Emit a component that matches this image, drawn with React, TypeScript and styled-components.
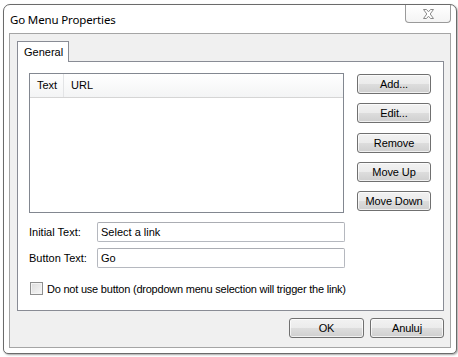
import React from 'react'
import styled, { createGlobalStyle } from 'styled-components'

const GlobalStyle = createGlobalStyle`
    html, body {
        margin: 0;
        padding: 0;
        background: #ffffff;
    }
    body {
        font-family: "Liberation Sans", Arial, sans-serif;
        font-size: 11px;
        color: #000;
    }
`

const Page = styled.div`
    width: 458px;
    height: 357px;
    padding: 4px 0 0 3px;
    box-sizing: border-box;
`

const Window = styled.div`
    width: 454px;
    height: 350px;
    box-sizing: border-box;
    border: 1px solid #6b6b6b;
    border-radius: 7px 7px 5px 5px;
    background: #ffffff;
    box-shadow: 1px 1px 2px rgba(0, 0, 0, 0.35);
    display: flex;
    flex-direction: column;
    padding: 0 5px 5px 5px;
`

const TitleBar = styled.div`
    height: 28px;
    display: flex;
    align-items: flex-start;
`

const Title = styled.div`
    font-family: "Noto Sans", "Open Sans", sans-serif;
    font-size: 11.5px;
    letter-spacing: -0.15px;
    line-height: 16px;
    margin-top: 7px;
    margin-left: 1px;
    color: #000;
`

const CloseButton = styled.div`
    margin-left: auto;
    width: 46px;
    height: 18px;
    box-sizing: border-box;
    border: 1px solid #9a9a9a;
    border-top: none;
    border-radius: 0 0 4px 4px;
    background: linear-gradient(#ffffff, #f4f4f4);
    display: flex;
    align-items: center;
    justify-content: center;
`

const Content = styled.div`
    flex: 1;
    border: 1px solid #a5a5a5;
    background: #f0f0f0;
    display: flex;
    flex-direction: column;
    padding: 7px 6px 0 7px;
`

const TabStrip = styled.div`
    display: flex;
    position: relative;
    z-index: 1;
    margin-bottom: -1px;
`

const Tab = styled.div`
    width: 52px;
    height: 21px;
    box-sizing: border-box;
    border: 1px solid #898c95;
    border-bottom: none;
    background: #ffffff;
    padding: 4px 0 0 6px;
`

const TabPanel = styled.div`
    height: 250px;
    box-sizing: border-box;
    border: 1px solid #898c95;
    background: #ffffff;
    padding: 11px 12px 0 11px;
    display: flex;
    flex-direction: column;
`

const TopRow = styled.div`
    display: flex;
    gap: 13px;
`

const ListView = styled.div`
    width: 315px;
    height: 140px;
    box-sizing: border-box;
    border: 1px solid #828790;
    background: #ffffff;
`

const ListHeader = styled.div`
    display: flex;
    height: 23px;
    border-bottom: 1px solid #d5d5d5;
    background: linear-gradient(#ffffff, #f3f4f5);
`

const HeaderCell = styled.div<{ $w?: number }>`
    width: ${({ $w }) => ($w ? `${$w}px` : 'auto')};
    flex: ${({ $w }) => ($w ? 'none' : '1')};
    box-sizing: border-box;
    padding: 5px 0 0 7px;
    border-right: ${({ $w }) => ($w ? '1px solid #e3e4e6' : 'none')};
`

const ButtonColumn = styled.div`
    display: flex;
    flex-direction: column;
    gap: 9.25px;
    margin-top: 1px;
`

const Button = styled.div<{ $w: number }>`
    width: ${({ $w }) => $w}px;
    height: 20px;
    box-sizing: border-box;
    border: 1px solid #707070;
    border-radius: 3px;
    background: linear-gradient(#f2f2f2 0%, #ebebeb 50%, #dddddd 51%, #cfcfcf 100%);
    box-shadow: inset 0 0 0 1px rgba(255, 255, 255, 0.7);
    display: flex;
    align-items: center;
    justify-content: center;
    letter-spacing: -0.1px;
    color: #000;
`

const FieldRow = styled.div<{ $top: number }>`
    display: flex;
    align-items: center;
    margin-top: ${({ $top }) => $top}px;
`

const Label = styled.div`
    width: 68px;
`

const TextBox = styled.div`
    width: 248px;
    height: 20px;
    box-sizing: border-box;
    border: 1px solid #b5b8bf;
    border-top-color: #abadb3;
    border-radius: 2px;
    background: #ffffff;
    padding: 0 3px;
    display: flex;
    align-items: center;
`

const CheckRow = styled.div`
    display: flex;
    align-items: center;
    margin-top: 14px;
    margin-left: 1px;
    gap: 4px;
`

const CheckBox = styled.div`
    width: 13px;
    height: 13px;
    box-sizing: border-box;
    border: 1px solid #8e8f8f;
    background: linear-gradient(135deg, #dcdcdc, #f7f7f7);
    box-shadow: inset 0 0 0 1px #f4f4f4;
`

const CheckLabel = styled.span`
    letter-spacing: -0.22px;
`

const Footer = styled.div`
    display: flex;
    justify-content: flex-end;
    gap: 6px;
    padding-top: 7px;
`

function CloseGlyph() {
    return (
        <svg width="13" height="10" viewBox="0 0 13 10">
            <path
                d="M1.5 0.5 H4.5 L6.5 2.8 L8.5 0.5 H11.5 L8.2 5 L11.5 9.5 H8.5 L6.5 7.2 L4.5 9.5 H1.5 L4.8 5 Z"
                fill="#ffffff"
                stroke="#8a8a8a"
                strokeWidth="1"
                strokeLinejoin="round"
            />
        </svg>
    )
}

export default function App() {
    return (
        <Page>
            <GlobalStyle />
            <Window>
                <TitleBar>
                    <Title>Go Menu Properties</Title>
                    <CloseButton>
                        <CloseGlyph />
                    </CloseButton>
                </TitleBar>
                <Content>
                    <TabStrip>
                        <Tab>General</Tab>
                    </TabStrip>
                    <TabPanel>
                        <TopRow>
                            <ListView>
                                <ListHeader>
                                    <HeaderCell $w={34}>Text</HeaderCell>
                                    <HeaderCell>URL</HeaderCell>
                                </ListHeader>
                            </ListView>
                            <ButtonColumn>
                                <Button $w={74}>Add...</Button>
                                <Button $w={74}>Edit...</Button>
                                <Button $w={74}>Remove</Button>
                                <Button $w={74}>Move Up</Button>
                                <Button $w={74}>Move Down</Button>
                            </ButtonColumn>
                        </TopRow>
                        <FieldRow $top={9}>
                            <Label>Initial Text:</Label>
                            <TextBox>Select a link</TextBox>
                        </FieldRow>
                        <FieldRow $top={6}>
                            <Label>Button Text:</Label>
                            <TextBox>Go</TextBox>
                        </FieldRow>
                        <CheckRow>
                            <CheckBox />
                            <CheckLabel>Do not use button (dropdown menu selection will trigger the link)</CheckLabel>
                        </CheckRow>
                    </TabPanel>
                    <Footer>
                        <Button $w={75}>OK</Button>
                        <Button $w={74}>Anuluj</Button>
                    </Footer>
                </Content>
            </Window>
        </Page>
    )
}
